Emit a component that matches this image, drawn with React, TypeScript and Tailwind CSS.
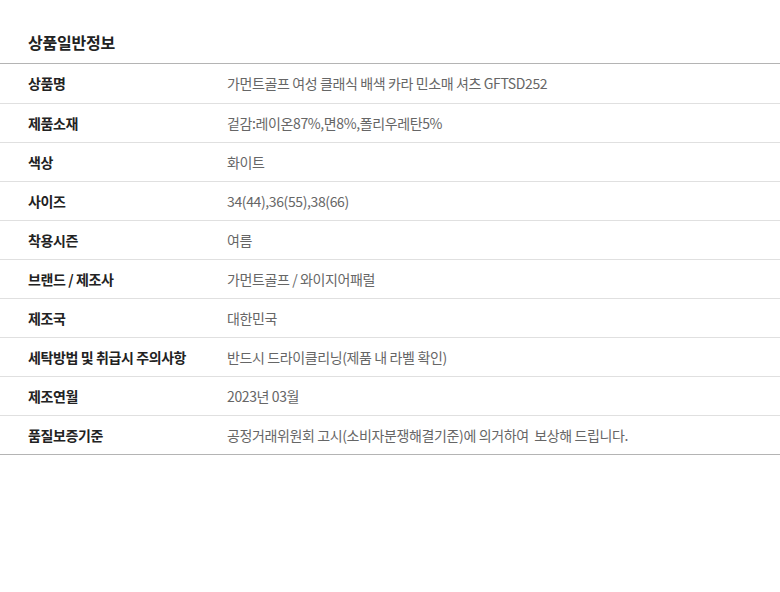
const rows: [string, string][] = [
  ['상품명', '가먼트골프 여성 클래식 배색 카라 민소매 셔츠 GFTSD252'],
  ['제품소재', '겉감:레이온87%,면8%,폴리우레탄5%'],
  ['색상', '화이트'],
  ['사이즈', '34(44),36(55),38(66)'],
  ['착용시즌', '여름'],
  ['브랜드 / 제조사', '가먼트골프 / 와이지어패럴'],
  ['제조국', '대한민국'],
  ['세탁방법 및 취급시 주의사항', '반드시 드라이클리닝(제품 내 라벨 확인)'],
  ['제조연월', '2023년 03월'],
  ['품질보증기준', '공정거래위원회 고시(소비자분쟁해결기준)에 의거하여  보상해 드립니다.'],
];

export default function App() {
  return (
    <div className="w-[780px] h-[592px] bg-white font-['Noto_Sans_CJK_KR','Noto_Sans',sans-serif]">
      <h2 className="h-[63px] pl-[28px] pt-[29px] text-[16px] leading-[26px] font-bold text-[#222] tracking-[-0.2px]">
        상품일반정보
      </h2>
      <div className="border-t border-b border-[#b4b4b4]">
        {rows.map(([label, value], i) => (
          <div
            key={label}
            className={`flex items-center h-[39px] ${i > 0 ? 'border-t border-[#e0e0e0]' : ''}`}
          >
            <div className="w-[199px] ml-[28px] shrink-0 text-[14px] font-bold text-[#222] tracking-[-0.4px]">{label}</div>
            <div className="text-[14px] text-[#666] whitespace-pre tracking-[-0.38px]">{value}</div>
          </div>
        ))}
      </div>
    </div>
  );
}
